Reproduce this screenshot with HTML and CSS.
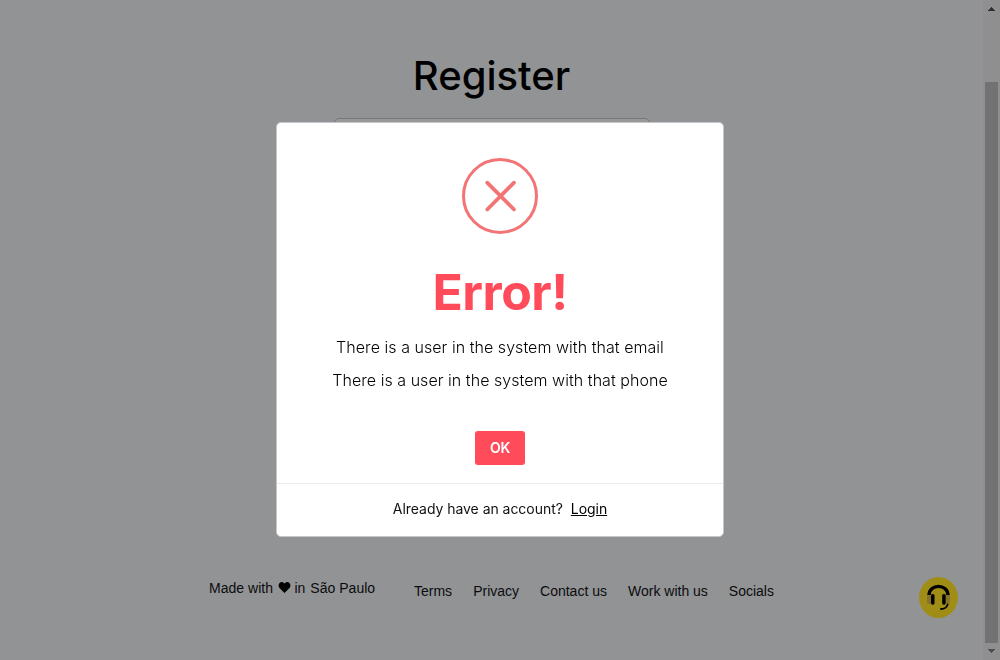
FILE: index.html
```
<!DOCTYPE html>
<html lang="en">
<head>
<meta charset="utf-8">
<title>Register</title>
<link rel="stylesheet" href="styles.css">
</head>
<body>
<div class="app">
  <main class="page">
    <h1 class="page-title">Register</h1>
    <div class="form-card"></div>
    <footer class="footer">
      <p class="made">Made with <svg class="heart" viewBox="0 0 12 11"><path d="M6 11 1 5.900C-.3 4.500-.2 2.100 1.100.9 2.500-.3 4.500-.1 5.600 1.200L6 1.600l.4-.4C7.500-.1 9.500-.3 10.900.9c1.300 1.200 1.400 3.600.1 5z"/></svg> in <span class="city">São Paulo</span></p>
      <nav class="links"><a>Terms</a><a>Privacy</a><a>Contact us</a><a>Work with us</a><a>Socials</a></nav>
    </footer>
  </main>
  <div class="scrollbar">
    <svg class="arrow up" viewBox="0 0 7 4" shape-rendering="crispEdges"><path d="M3 0h1v1h1v1h1v1h1v1H0V3h1V2h1V1h1z"/></svg>
    <div class="thumb"></div>
    <svg class="arrow down" viewBox="0 0 7 4" shape-rendering="crispEdges"><path d="M0 0h7v1H6v1H5v1H4v1H3V3H2V2H1V1H0z"/></svg>
  </div>
</div>
<svg class="support" viewBox="0 0 40 42">
  <ellipse class="support-bg" cx="19.500" cy="20.500" rx="19.500" ry="20.500"/>
  <path class="ear" d="M12 17H10Q8 17 8 19v6q0 2 2 2h2zM27 17h2q2 0 2 2v6q0 2-2 2h-2z"/>
  <path class="band" d="M10 18C10.500 6.500 28.500 6.500 29 18"/>
  <rect x="12" y="17" width="3.500" height="10.700" rx="1.600"/>
  <rect x="23.200" y="17" width="3.500" height="10.700" rx="1.600"/>
  <path class="mic" d="M28.700 27.500C27.700 30.500 25.500 32 22 32"/>
</svg>
<section class="modal" role="dialog">
  <div class="modal-body">
    <svg class="error-icon" viewBox="0 0 76 76"><circle cx="38" cy="38" r="36.500"/><path d="M25.200 24.700 52 51.500M52 24.700 25.200 51.500"/></svg>
    <h2 class="error-title">Error!</h2>
    <p class="message">There is a user in the system with that email</p>
    <p class="message">There is a user in the system with that phone</p>
    <button class="ok">OK</button>
  </div>
  <div class="modal-footer">Already have an account? <a class="login">Login</a></div>
</section>
</body>
</html>
```
FILE: styles.css
```
* { box-sizing: border-box; }
body { margin: 0; background: #929395; color: #000; font-family: Inter, "Liberation Sans", sans-serif; overflow: hidden; }
h1, h2, p { margin: 0; }
.app { display: flex; height: 660px; }
.page { flex: 1; display: flex; flex-direction: column; align-items: center; padding-top: 52px; }
.page-title { font-size: 40px; font-weight: 500; line-height: 48px; }
.form-card { width: 316px; height: 410px; margin-top: 18px; border: 1px solid #77787a; border-radius: 5px; background: #989898; }
.footer { display: flex; width: 565px; margin-top: 50px; font: 14px/20px "Liberation Sans", Arial, sans-serif; color: #0b0c0d; white-space: nowrap; }
.made { width: 205px; letter-spacing: 0.03px; }
.heart { width: 13px; height: 11px; margin-left: 0.5px; fill: #000; }
.city { margin-left: 1px; }
.links { display: flex; gap: 21px; padding-top: 3px; }
.scrollbar { width: 17px; background: #8f8f8f; display: flex; flex-direction: column; align-items: center; padding: 7px 0; }
.arrow { width: 7px; height: 4px; }
.up { fill: #303030; }
.down { fill: #4d4d4d; margin-top: auto; }
.thumb { width: 13px; height: 561px; margin-top: 71px; background: #727272; }
.support { position: fixed; left: 919px; top: 577px; width: 40px; height: 42px; }
.support-bg { fill: #a08d15; }
.ear { fill: #88712a; }
.band { fill: none; stroke: #000; stroke-width: 3.300; }
.mic { fill: none; stroke: #000; stroke-width: 1.800; stroke-linecap: round; }
.modal { position: fixed; left: 276px; top: 122px; width: 448px; height: 415px; display: flex; flex-direction: column; background: #fff; border: 1px solid #c3c7cb; border-radius: 5px; }
.modal-body { height: 361px; display: flex; flex-direction: column; align-items: center; padding-top: 35px; border-bottom: 1px solid #e9ebed; }
.error-icon { width: 76px; height: 76px; fill: none; stroke: #f27474; stroke-width: 3; }
.error-icon path { stroke-width: 3.800; stroke-linecap: round; }
.error-title { margin-top: 28px; font-size: 50px; line-height: 60px; font-weight: 700; letter-spacing: -0.5px; color: #ff4b5a; }
.message { font-size: 16px; line-height: 33px; font-weight: 300; letter-spacing: 0.045px; color: #000; }
.error-title + .message { margin-top: 9px; }
.ok { width: 50px; height: 34px; margin-top: 34px; padding: 0 0 1px; border: 0; border-radius: 3px; background: #ff4b5a; color: #fff; font: 600 14px Inter, sans-serif; letter-spacing: -0.2px; }
.modal-footer { flex: 1; display: flex; justify-content: center; align-items: center; gap: 8px; padding-bottom: 3px; font-size: 14px; letter-spacing: -0.04px; color: #111; }
.login { color: #000; text-decoration: underline; }
```
